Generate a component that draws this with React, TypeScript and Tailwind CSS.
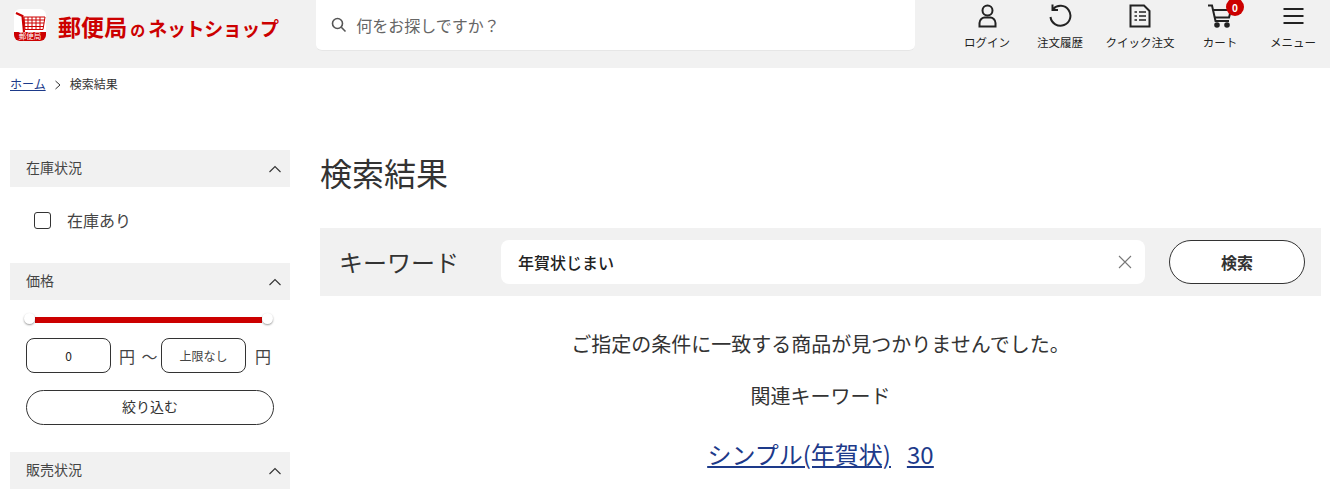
import React from "react";

const font = { fontFamily: '"Noto Sans CJK JP", "Noto Sans", sans-serif' };

function Chevron() {
  return (
    <svg width="14" height="8" viewBox="0 0 14 8" fill="none" stroke="#333" strokeWidth="1.1">
      <path d="M1.5 7 L7 1.5 L12.5 7" />
    </svg>
  );
}

function SectionHead({ label }: { label: string }) {
  return (
    <div className="flex h-[37px] items-center justify-between bg-[#f1f1f1] pl-4 pr-[8px] text-[14px] text-[#444]">
      <span className="-mt-[2px]">{label}</span>
      <Chevron />
    </div>
  );
}

function NavItem({ label, icon, width }: { label: string; icon: React.ReactNode; width: string }) {
  return (
    <div className={`flex flex-col items-center ${width}`}>
      <div className="flex h-[32px] items-center justify-center">{icon}</div>
      <span className="mt-[2px] whitespace-nowrap text-[11.5px] leading-[16px] text-[#222]">{label}</span>
    </div>
  );
}

function Logo() {
  return (
    <svg width="32" height="32" viewBox="0 0 32 32">
      <path d="M6 0 H26 A6 6 0 0 1 32 6 V26 A6 6 0 0 1 26 32 H6 A6 6 0 0 1 0 26 V6 A6 6 0 0 1 6 0 Z" fill="#fff" />
      <path d="M0 23 H32 V26 A6 6 0 0 1 26 32 H6 A6 6 0 0 1 0 26 Z" fill="#cc0000" />
      <path d="M2 4 L8.5 7 L10 23" fill="none" stroke="#cc0000" strokeWidth="2.2" />
      <path d="M10 8 H31 L29 20.5 H11 Z M10 11 H31 M10 14 H30 M10 17.5 H30 M14 8 V20 M18 8 V20 M22 8 V20 M26 8 V20" fill="none" stroke="#cc0000" strokeWidth="1" />
      <text x="16" y="30" textAnchor="middle" fontSize="7.5" fill="#fff">郵便局</text>
    </svg>
  );
}

export default function App() {
  return (
    <div className="h-[495px] w-[1330px] overflow-hidden bg-white text-[#333]" style={font}>
      <header className="flex h-[68px] bg-[#f1f1f1]">
        <div className="flex w-[317px] items-start pl-[14px] pt-[9px]">
          <Logo />
          <div className="ml-[12px] mt-[2px] flex items-baseline whitespace-nowrap font-bold leading-[30px] text-[#cc0000]">
            <span className="text-[23px] tracking-[0.1px]">郵便局</span>
            <span className="mx-[3px] text-[15px]">の</span>
            <span className="text-[19px] tracking-[-0.4px]">ネットショップ</span>
          </div>
        </div>
        <div className="flex h-[51px] w-[600px] items-center gap-[9px] rounded-b-[6px] border-b border-[#e6e6e6] bg-white pl-[15px] text-[16px] text-[#666]">
          <svg width="16" height="16" viewBox="0 0 16 16" fill="none" stroke="#555" strokeWidth="1.6">
            <circle cx="6.5" cy="6.5" r="5" />
            <path d="M10.3 10.3 L14.5 14.5" />
          </svg>
          <span>何をお探しですか？</span>
        </div>
        <nav className="ml-[35px] flex">
          <NavItem
            width="w-[74px]"
            label="ログイン"
            icon={
              <svg width="19" height="24" viewBox="0 0 19 24" fill="none" stroke="#222" strokeWidth="2">
                <circle cx="9.5" cy="6.5" r="5" />
                <path d="M1.5 22.5 V19 C1.5 15.5 4.5 13.5 6.5 13.5 H12.5 C14.5 13.5 17.5 15.5 17.5 19 V22.5 Z" />
              </svg>
            }
          />
          <NavItem
            width="w-[72px]"
            label="注文履歴"
            icon={
              <svg width="24" height="24" viewBox="0 0 24 24" fill="none" stroke="#222" strokeWidth="2">
                <path d="M5 5 A10 10 0 1 1 2.5 13" />
                <path d="M4.5 0.5 V6 H10" />
              </svg>
            }
          />
          <NavItem
            width="w-[88px]"
            label="クイック注文"
            icon={
              <svg width="22" height="24" viewBox="0 0 22 24" fill="none" stroke="#222" strokeWidth="2">
                <path d="M1.5 1.5 H15 L20.5 7 V22.5 H1.5 Z" />
                <path d="M5.5 8 H8 M10 8 H17 M5.5 12 H8 M10 12 H17 M5.5 16 H8 M10 16 H17" strokeWidth="1.7" />
              </svg>
            }
          />
          <NavItem
            width="w-[72px]"
            label="カート"
            icon={
              <div className="relative">
                <svg width="24" height="24" viewBox="0 0 24 24" fill="none" stroke="#222" strokeWidth="2">
                  <path d="M0 1.5 H4 L7.5 17 H21" />
                  <path d="M5 6 H23 L21 13.5 H6.5" />
                  <circle cx="9" cy="21" r="1.8" fill="#222" />
                  <circle cx="19" cy="21" r="1.8" fill="#222" />
                </svg>
                <span className="absolute -right-[12px] -top-[6px] flex h-[18px] w-[18px] items-center justify-center rounded-full bg-[#cc0000] text-[10px] font-bold text-white">
                  0
                </span>
              </div>
            }
          />
          <NavItem
            width="w-[74px]"
            label="メニュー"
            icon={
              <svg width="21" height="18" viewBox="0 0 21 18" fill="none" stroke="#222" strokeWidth="1.8">
                <path d="M0.5 2 H20.5 M0.5 9 H20.5 M0.5 16 H20.5" />
              </svg>
            }
          />
        </nav>
      </header>

      <div className="flex h-[33px] items-center pb-[2px] pl-[10px] text-[12px]">
        <a className="text-[#1d3a8a] underline">ホーム</a>
        <svg width="8" height="10" viewBox="0 0 8 10" fill="none" stroke="#333" strokeWidth="1" className="ml-[8px] mt-[3px]">
          <path d="M1.5 1 L6 5 L1.5 9" />
        </svg>
        <span className="ml-[8px]">検索結果</span>
      </div>

      <div className="mt-[49px] flex">
        <aside className="ml-[10px] w-[280px]">
          <SectionHead label="在庫状況" />
          <div className="flex h-[76px] items-start pl-[24px] pt-[24px]">
            <span className="mt-[1px] h-[17px] w-[17px] rounded-[3px] border border-[#333]" />
            <span className="ml-[16px] -mt-[1px] text-[16px] leading-[20px] text-[#444]">在庫あり</span>
          </div>
          <SectionHead label="価格" />
          <div className="px-4">
            <div className="relative ml-[9px] mr-[12px] mt-[17px] h-[6px] bg-[#cc0000]">
              <span className="absolute -left-[11px] -top-[4px] h-[11px] w-[11px] rounded-full bg-white shadow-[0_1px_2px_rgba(0,0,0,0.4)]" />
              <span className="absolute -right-[11px] -top-[4px] h-[11px] w-[11px] rounded-full bg-white shadow-[0_1px_2px_rgba(0,0,0,0.4)]" />
            </div>
            <div className="mt-[15px] flex items-center text-[16px] text-[#444]">
              <div className="flex h-[35px] w-[85px] items-center justify-center rounded-[8px] border border-[#333] text-[12px] text-[#222]">0</div>
              <span className="ml-[8px] w-[16px]">円</span>
              <span className="ml-[3px] w-[23px] text-center">～</span>
              <div className="flex h-[35px] w-[85px] items-center justify-center rounded-[8px] border border-[#333] text-[12px] text-[#444]">上限なし</div>
              <span className="ml-[9px]">円</span>
            </div>
            <button className="mt-[17px] flex h-[35px] w-[248px] items-center justify-center rounded-full border border-[#333] pb-[2px] text-[14px] text-[#333]">
              絞り込む
            </button>
          </div>
          <div className="mt-[27px]">
            <SectionHead label="販売状況" />
          </div>
        </aside>

        <main className="ml-[30px] w-[1001px]">
          <h1 className="-mt-[1px] text-[32px] font-normal leading-[46px] text-[#333]">検索結果</h1>
          <div className="mt-[33px] flex h-[68px] items-center bg-[#f1f1f1] pl-[19px]">
            <span className="w-[162px] text-[24px] text-[#333]">キーワード</span>
            <div className="flex h-[44px] w-[644px] items-center justify-between rounded-[8px] bg-white pl-[17px] pr-[13px] text-[16px] font-medium text-[#222]">
              <span>年賀状じまい</span>
              <svg width="14" height="14" viewBox="0 0 14 14" fill="none" stroke="#777" strokeWidth="1.1">
                <path d="M1 1 L13 13 M13 1 L1 13" />
              </svg>
            </div>
            <button className="ml-[24px] flex h-[44px] w-[136px] items-center justify-center rounded-full border border-[#333] bg-white text-[16px] font-bold text-[#333]">
              検索
            </button>
          </div>
          <p className="mt-[32px] text-center text-[20px] leading-[32px] text-[#333]">ご指定の条件に一致する商品が見つかりませんでした。</p>
          <p className="mt-[20px] text-center text-[20px] leading-[32px] text-[#333]">関連キーワード</p>
          <div className="mt-[24px] flex justify-center gap-[16px] text-[24px] leading-[36px] text-[#1d3a8a] underline">
            <a>シンプル(年賀状)</a>
            <a>30</a>
          </div>
        </main>
      </div>
    </div>
  );
}
